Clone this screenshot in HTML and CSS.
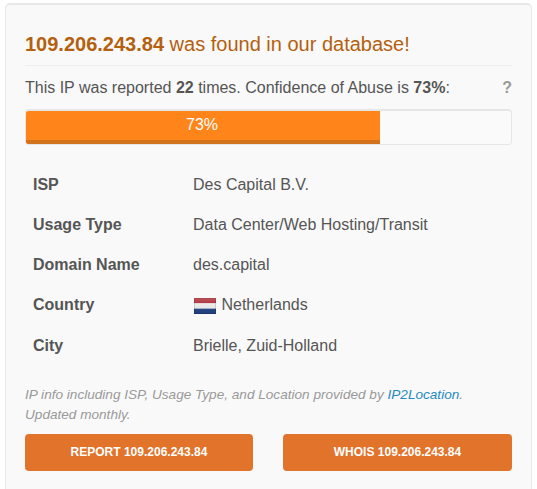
FILE: index.html
```html
<!DOCTYPE html>
<html lang="en">
<head>
<meta charset="utf-8">
<title>109.206.243.84</title>
<link rel="stylesheet" href="styles.css">
</head>
<body>
<main class="card">
  <h3 class="title"><b>109.206.243.84</b> was found in our database!</h3>
  <div class="summary">
    <p>This IP was reported <b>22</b> times. Confidence of Abuse is <b>73%</b>:</p>
    <span class="help">?</span>
  </div>
  <div class="progress">
    <div class="bar" style="width:73%">73%</div>
  </div>
  <table class="info">
    <tr><th>ISP</th><td>Des Capital B.V.</td></tr>
    <tr><th>Usage Type</th><td>Data Center/Web Hosting/Transit</td></tr>
    <tr><th>Domain Name</th><td>des.capital</td></tr>
    <tr><th>Country</th><td><svg class="flag" viewBox="0 0 22 16" width="22" height="16"><defs><linearGradient id="sheen" x1="0" y1="0" x2="0" y2="1"><stop offset="0" stop-color="#fff" stop-opacity="0.25"/><stop offset="1" stop-color="#000" stop-opacity="0.1"/></linearGradient></defs><rect width="22" height="5.33" fill="#ae1c28"/><rect y="5.33" width="22" height="5.34" fill="#fff"/><rect y="10.67" width="22" height="5.33" fill="#21468b"/><rect width="22" height="16" fill="url(#sheen)"/><rect x="0.5" y="0.5" width="21" height="15" fill="none" stroke="#000" stroke-opacity="0.12"/></svg> Netherlands</td></tr>
    <tr class="last"><th>City</th><td>Brielle, Zuid-Holland</td></tr>
  </table>
  <p class="note">IP info including ISP, Usage Type, and Location provided by <a href="#">IP2Location</a>. Updated monthly.</p>
  <div class="actions">
    <a class="btn" href="#">REPORT 109.206.243.84</a>
    <a class="btn" href="#">WHOIS 109.206.243.84</a>
  </div>
</main>
</body>
</html>
```

FILE: styles.css
```css
* { box-sizing: border-box; }
html, body { margin: 0; background: #fff; }
body {
  font-family: "Liberation Sans", Arial, sans-serif;
  font-size: 16px;
  color: #555;
  height: 489px;
  overflow: hidden;
}
.card {
  margin: 3px 0 0 5px;
  width: 527px;
  height: 500px;
  padding: 27px 19px 0 19px;
  background: #f9f9f9;
  border: 1px solid #e8e8e8;
  border-top: 2px solid #e8e8e8;
  border-radius: 5px;
}
.title {
  margin: 0;
  padding-bottom: 9px;
  font-size: 20px;
  line-height: 24px;
  font-weight: 400;
  color: #b4600f;
  border-bottom: 1px solid #eee;
}
.summary {
  display: flex;
  justify-content: space-between;
  align-items: center;
  margin-top: 11px;
  height: 22px;
}
.summary p { margin: 0; }
.help { font-weight: 700; color: #999; }
.progress {
  margin-top: 10px;
  height: 36px;
  background: #fafafa;
  border: 1px solid #e6e6e6;
  border-top-width: 2px;
  border-radius: 4px;
  overflow: hidden;
}
.bar {
  height: 100%;
  padding-right: 2px;
  background: #ff851b;
  border-bottom: 4px solid #d2721c;
  color: #fff;
  text-align: center;
  line-height: 28px;
}
.info {
  margin-top: 20px;
  border-collapse: collapse;
}
.info th {
  width: 168px;
  padding: 0 0 0 8px;
  height: 40px;
  text-align: left;
  font-weight: 700;
}
.info td { padding: 0; height: 40px; }
.info .last th, .info .last td { height: 41px; padding-top: 1px; }
.flag { margin-left: 1px; margin-right: 1px; vertical-align: -4px; }
.note {
  margin: 19px 0 0;
  font-size: 13.6px;
  line-height: 20px;
  font-style: italic;
  color: #999;
}
.note a { color: #1f8ac0; text-decoration: none; }
.actions {
  display: flex;
  justify-content: space-between;
  margin-top: 9px;
}
.btn {
  width: 228px;
  height: 37px;
  background: #e2732a;
  border-radius: 4px;
  color: #fff;
  font-size: 12px;
  font-weight: 700;
  line-height: 37px;
  text-align: center;
  text-decoration: none;
}
.btn + .btn { width: 229px; }
```
